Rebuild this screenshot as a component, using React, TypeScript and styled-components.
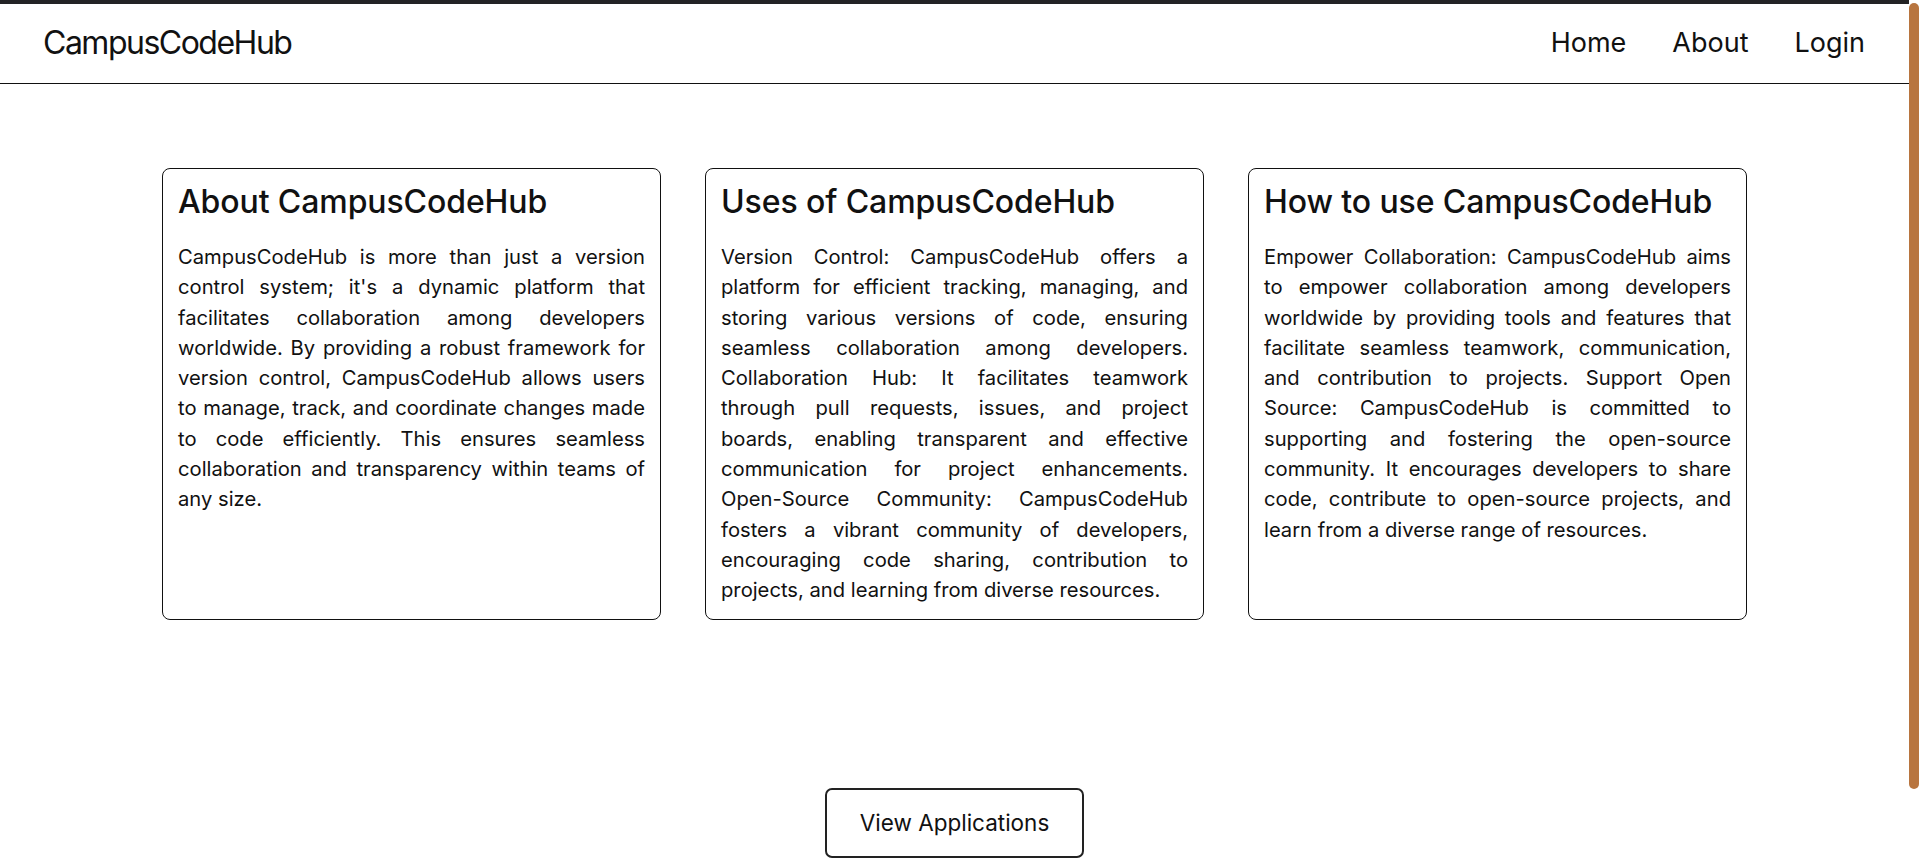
import styled, { createGlobalStyle } from "styled-components";

const GlobalStyle = createGlobalStyle`
  html, body {
    margin: 0;
    padding: 0;
    background: #ffffff;
    color: #111111;
    font-family: Inter, "Noto Sans", "Liberation Sans", sans-serif;
  }
`;

const Page = styled.div`
  min-height: 945px;
  padding-right: 10px;
  display: flex;
  flex-direction: column;
`;

// drawn stand-in for the page's custom scrollbar
const ScrollTrack = styled.div`
  position: fixed;
  top: 0;
  right: 0;
  width: 10px;
  height: 100vh;
  background: #ffffff;
`;

const ScrollThumb = styled.div`
  margin-top: 3px;
  height: 786px;
  border-radius: 5px;
  background: #b8753f;
`;

const Header = styled.header`
  height: 79px;
  border-top: 4px solid #232325;
  border-bottom: 1px solid #111111;
  padding: 0 44px 0 43px;
  display: flex;
  align-items: center;
  justify-content: space-between;
`;

const Logo = styled.div`
  font-size: 32px;
  letter-spacing: -1.5px;
  color: #111111;
  margin-top: -2px;
`;

const Nav = styled.nav`
  display: flex;
  gap: 46px;
  margin-top: -2px;
`;

const NavLink = styled.a`
  font-size: 27px;
  color: #111111;
  text-decoration: none;
  cursor: pointer;
`;

const Main = styled.main`
  display: flex;
  flex-direction: column;
  align-items: center;
  padding-top: 84px;
`;

const CardRow = styled.section`
  display: flex;
  gap: 44px;
  justify-content: center;
  align-items: stretch;
`;

const Card = styled.article`
  box-sizing: border-box;
  width: 499px;
  border: 1px solid #111111;
  border-radius: 8px;
  padding: 13px 15px 13px 15px;
`;

const CardTitle = styled.h2`
  margin: 0;
  font-size: 32px;
  font-weight: 500;
  letter-spacing: -0.1px;
  line-height: 39px;
  color: #111111;
`;

const CardText = styled.p`
  margin: 21px 0 0;
  font-size: 20.2px;
  line-height: 1.5;
  text-align: justify;
  color: #111111;
`;

const ActionButton = styled.button`
  margin-top: 168px;
  width: 259px;
  height: 70px;
  box-sizing: border-box;
  border: 2px solid #222222;
  border-radius: 7px;
  background: #ffffff;
  font-family: inherit;
  font-size: 22.5px;
  color: #111111;
  cursor: pointer;
`;

const cards = [
  {
    title: "About CampusCodeHub",
    text: "CampusCodeHub is more than just a version control system; it's a dynamic platform that facilitates collaboration among developers worldwide. By providing a robust framework for version control, CampusCodeHub allows users to manage, track, and coordinate changes made to code efficiently. This ensures seamless collaboration and transparency within teams of any size.",
  },
  {
    title: "Uses of CampusCodeHub",
    text: "Version Control: CampusCodeHub offers a platform for efficient tracking, managing, and storing various versions of code, ensuring seamless collaboration among developers. Collaboration Hub: It facilitates teamwork through pull requests, issues, and project boards, enabling transparent and effective communication for project enhancements. Open-Source Community: CampusCodeHub fosters a vibrant community of developers, encouraging code sharing, contribution to projects, and learning from diverse resources.",
  },
  {
    title: "How to use CampusCodeHub",
    text: "Empower Collaboration: CampusCodeHub aims to empower collaboration among developers worldwide by providing tools and features that facilitate seamless teamwork, communication, and contribution to projects. Support Open Source: CampusCodeHub is committed to supporting and fostering the open-source community. It encourages developers to share code, contribute to open-source projects, and learn from a diverse range of resources.",
  },
];

const App = () => {
  return (
    <>
      <GlobalStyle />
      <Page>
        <Header>
          <Logo>CampusCodeHub</Logo>
          <Nav>
            <NavLink>Home</NavLink>
            <NavLink>About</NavLink>
            <NavLink>Login</NavLink>
          </Nav>
        </Header>
        <Main>
          <CardRow>
            {cards.map((card) => (
              <Card key={card.title}>
                <CardTitle>{card.title}</CardTitle>
                <CardText>{card.text}</CardText>
              </Card>
            ))}
          </CardRow>
          <ActionButton>View Applications</ActionButton>
        </Main>
      </Page>
      <ScrollTrack>
        <ScrollThumb />
      </ScrollTrack>
    </>
  );
};

export default App;
